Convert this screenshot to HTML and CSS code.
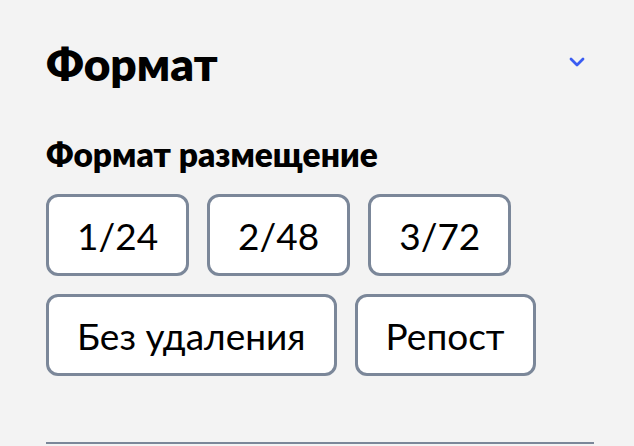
FILE: index.html
```html
<!DOCTYPE html>
<html lang="ru">
<head>
<meta charset="utf-8">
<link rel="stylesheet" href="styles.css">
</head>
<body>
<section class="panel">
  <div class="panel-header">
    <h2 class="panel-title">Формат</h2>
    <svg class="chevron" width="16" height="10" viewBox="0 0 16 10"><path d="M2 2 L8 8 L14 2" fill="none" stroke="#3a5cf2" stroke-width="2.8" stroke-linecap="round" stroke-linejoin="round"/></svg>
  </div>
  <h3 class="group-title">Формат размещение</h3>
  <div class="options">
    <button class="option">1/24</button>
    <button class="option">2/48</button>
    <button class="option">3/72</button>
    <button class="option">Без удаления</button>
    <button class="option">Репост</button>
  </div>
  <div class="divider"></div>
</section>
</body>
</html>
```
FILE: styles.css
```css
html, body {
  margin: 0;
  padding: 0;
  background: #f3f3f3;
}
body {
  font-family: Lato, "Noto Sans", sans-serif;
  color: #000;
}
.panel {
  padding: 0 40px 0 46px;
}
.panel-header {
  display: flex;
  justify-content: space-between;
  align-items: center;
  padding-top: 36px;
  padding-right: 9px;
}
.panel-title {
  margin: 0;
  font-size: 46px;
  font-weight: 800;
  line-height: 56px;
}
.chevron {
  display: block;
  margin-top: -4px;
}
.group-title {
  margin: 40px 0 0;
  font-size: 33.5px;
  font-weight: 800;
  line-height: 44px;
}
.options {
  display: flex;
  flex-wrap: wrap;
  gap: 18px;
  margin-top: 18px;
}
.option {
  box-sizing: border-box;
  height: 82px;
  padding: 0 28px;
  border: 3px solid #7b8799;
  border-radius: 12px;
  background: #fff;
  font-family: inherit;
  font-size: 37px;
  color: #000;
}
.divider {
  margin-top: 66px;
  height: 2px;
  background: #7b8799;
}
```
